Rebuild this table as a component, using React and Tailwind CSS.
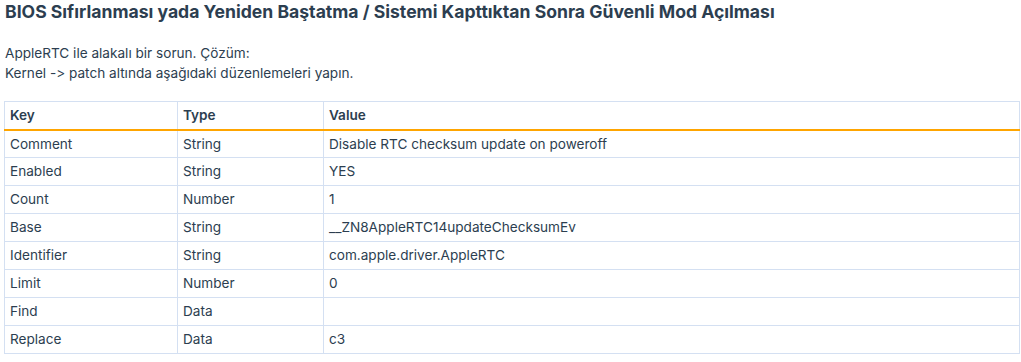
const rows = [
  ['Comment', 'String', 'Disable RTC checksum update on poweroff'],
  ['Enabled', 'String', 'YES'],
  ['Count', 'Number', '1'],
  ['Base', 'String', '__ZN8AppleRTC14updateChecksumEv'],
  ['Identifier', 'String', 'com.apple.driver.AppleRTC'],
  ['Limit', 'Number', '0'],
  ['Find', 'Data', ''],
  ['Replace', 'Data', 'c3'],
];

export default function App() {
  return (
    <div className="min-h-screen bg-white px-[4px] font-['Inter',sans-serif] text-[#2c3e50] [font-feature-settings:'calt'_0,'liga'_0]">
      <h1 className="pl-[1px] pt-[1px] text-[17.6px] leading-[22px] font-bold">
        BIOS Sıfırlanması yada Yeniden Baştatma / Sistemi Kapttıktan Sonra Güvenli Mod Açılması
      </h1>
      <p className="mt-[20px] pl-[1px] text-[13.6px] leading-[20px]">
        AppleRTC ile alakalı bir sorun. Çözüm:
        <br />
        Kernel -&gt; patch altında aşağıdaki düzenlemeleri yapın.
      </p>
      <table className="mt-[18px] w-[1016px] border-collapse text-left text-[13.6px]">
        <thead>
          <tr className="border-b-2 border-b-[#ffa500]">
            <th className="h-[28px] w-[173px] border border-[#d4e0f2] border-b-0 px-[5px] font-semibold">Key</th>
            <th className="w-[146px] border border-[#d4e0f2] border-b-0 px-[5px] font-semibold">Type</th>
            <th className="border border-[#d4e0f2] border-b-0 px-[5px] font-semibold">Value</th>
          </tr>
        </thead>
        <tbody>
          {rows.map(([k, t, v]) => (
            <tr key={k}>
              <td className="h-[28px] border border-[#d4e0f2] px-[5px]">{k}</td>
              <td className="border border-[#d4e0f2] px-[5px]">{t}</td>
              <td className="border border-[#d4e0f2] px-[5px]">{v}</td>
            </tr>
          ))}
        </tbody>
      </table>
    </div>
  );
}
